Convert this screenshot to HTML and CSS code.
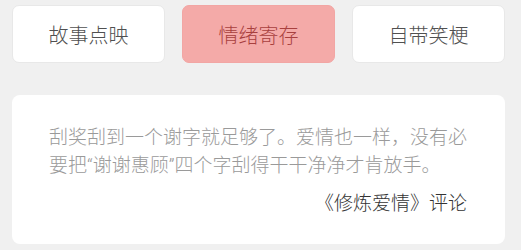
FILE: index.html
```html
<!DOCTYPE html>
<html lang="zh-CN">
<head>
<meta charset="utf-8">
<link rel="stylesheet" href="styles.css">
</head>
<body>
<div class="page">
  <nav class="tabs">
    <div class="tab">故事点映</div>
    <div class="tab active">情绪寄存</div>
    <div class="tab">自带笑梗</div>
  </nav>
  <section class="card">
    <p class="quote">刮奖刮到一个谢字就足够了。爱情也一样，没有必要把“谢谢惠顾”四个字刮得干干净净才肯放手。</p>
    <p class="source">《修炼爱情》评论</p>
  </section>
</div>
</body>
</html>
```
FILE: styles.css
```css
html, body {
  margin: 0;
  padding: 0;
  background: #f0f0f0;
  font-family: "Roboto", "Noto Sans CJK SC", sans-serif;
  font-weight: 300;
}
.page {
  padding: 5px 16px 0 12px;
}
.tabs {
  display: flex;
  gap: 17px;
}
.tab {
  flex: 1;
  height: 58px;
  box-sizing: border-box;
  border: 1px solid #e8e8e8;
  border-radius: 7px;
  background: #ffffff;
  color: #505050;
  font-size: 20px;
  font-weight: 300;
  display: flex;
  align-items: center;
  justify-content: center;
  padding-top: 1px;
}
.tab.active {
  background: #f4aaa8;
  border-color: #f2a6a4;
  color: #a8403e;
}
.card {
  margin-top: 32px;
  height: 149px;
  box-sizing: border-box;
  background: #ffffff;
  border-radius: 8px;
  padding: 29px 38px 0 37px;
}
.quote {
  margin: 0;
  font-size: 19px;
  line-height: 28px;
  color: #9a9a9a;
}
.source {
  margin: 10px 0 0;
  text-align: right;
  font-size: 19px;
  line-height: 28px;
  color: #333333;
}
```
